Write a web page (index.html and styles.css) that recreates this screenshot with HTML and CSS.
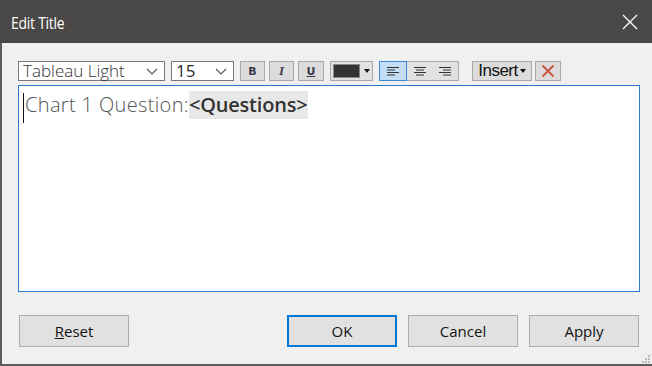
FILE: index.html
```html
<!DOCTYPE html>
<html>
<head>
<meta charset="utf-8">
<link rel="stylesheet" href="styles.css">
</head>
<body>
<div class="window">
  <div class="titlebar">
    <span class="title">Edit Title</span>
    <svg class="close" width="16" height="16" viewBox="0 0 16 16"><path d="M1 1L15 15M15 1L1 15" stroke="#fff" stroke-width="1.3" fill="none"/></svg>
  </div>
  <div class="content">
    <div class="toolbar">
      <div class="select font-sel"><span>Tableau Light</span><svg class="chev" width="12" height="7" viewBox="0 0 12 7"><path d="M1 1L6 6L11 1" stroke="#555" stroke-width="1.1" fill="none"/></svg></div>
      <div class="select size-sel"><span>15</span><svg class="chev" width="12" height="7" viewBox="0 0 12 7"><path d="M1 1L6 6L11 1" stroke="#555" stroke-width="1.1" fill="none"/></svg></div>
      <div class="tbtn fmt b">B</div>
      <div class="tbtn fmt i">I</div>
      <div class="tbtn fmt u">U</div>
      <div class="tbtn color"><span class="swatch"></span><span class="caret"></span></div>
      <div class="align">
        <div class="abtn sel"><svg width="12" height="9" viewBox="0 0 12 9"><path d="M0 .5H12M0 3H8M0 5.5H12M0 8H8" stroke="#333" fill="none"/></svg></div>
        <div class="abtn"><svg width="12" height="9" viewBox="0 0 12 9"><path d="M0 .5H12M2 3H10M0 5.5H12M2 8H10" stroke="#333" fill="none"/></svg></div>
        <div class="abtn"><svg width="12" height="9" viewBox="0 0 12 9"><path d="M0 .5H12M4 3H12M0 5.5H12M4 8H12" stroke="#333" fill="none"/></svg></div>
      </div>
      <div class="tbtn insert">Insert<span class="caret"></span></div>
      <div class="tbtn clear"><svg width="14" height="14" viewBox="0 0 14 14"><path d="M1.5 1.5L12.5 12.5M12.5 1.5L1.5 12.5" stroke="#c8553d" stroke-width="1.8" fill="none"/></svg></div>
    </div>
    <div class="editor">
      <div class="line"><span class="cursor"></span><span class="plain">Chart 1 Question:</span><span class="field">&lt;Questions&gt;</span></div>
    </div>
    <div class="buttons">
      <div class="btn"><span class="ul">R</span>eset</div>
      <div class="spacer"></div>
      <div class="btn ok">OK</div>
      <div class="btn">Cancel</div>
      <div class="btn">Apply</div>
    </div>
  </div>
  <div class="grip">
    <svg width="10" height="10" viewBox="0 0 10 10" fill="#b8b8b8"><rect x="7" y="1" width="2" height="2"/><rect x="4" y="4" width="2" height="2"/><rect x="7" y="4" width="2" height="2"/><rect x="1" y="7" width="2" height="2"/><rect x="4" y="7" width="2" height="2"/><rect x="7" y="7" width="2" height="2"/></svg>
  </div>
</div>
</body>
</html>
```

FILE: styles.css
```css
* { box-sizing: border-box; }
html, body { margin: 0; padding: 0; }
body { width: 652px; height: 366px; overflow: hidden; background: #f0f0f0; font-family: "Noto Sans", "Open Sans", sans-serif; }
.window { position: relative; width: 652px; height: 366px; background: #f0f0f0; border-left: 2px solid #5c5c5c; border-bottom: 2px solid #5c5c5c; }
.titlebar { height: 43px; background: #4a4846; display: flex; align-items: center; justify-content: space-between; padding: 0 14px 0 11px; margin-left: -2px; }
.title { display: inline-block; color: #fff; font-family: "Open Sans", "Noto Sans", sans-serif; font-size: 17px; letter-spacing: -0.3px; transform: scaleX(0.82); transform-origin: left center; margin-top: 1px; }
.content { padding: 18px 10px 0 16px; }
.toolbar { display: flex; height: 20px; align-items: stretch; }
.select { display: flex; align-items: center; justify-content: space-between; background: #fff; border: 1px solid #7a7a7a; padding: 0 6px 0 4px; font-family: "Open Sans", sans-serif; font-size: 17px; color: #2a2a2a; line-height: 18px; }
.font-sel { width: 147px; font-weight: 300; color: #333; }
.size-sel { width: 63px; margin-left: 6px; }
.tbtn { display: flex; align-items: center; justify-content: center; background: #dcdcdc; border: 1px solid #a8a8a8; }
.fmt { width: 25px; font-family: "DejaVu Sans", sans-serif; font-weight: bold; font-size: 11px; color: #3a3a4a; }
.b { margin-left: 6px; }
.i { margin-left: 4px; font-style: italic; font-family: "Liberation Serif", serif; font-size: 13px; }
.u { margin-left: 4px; width: 26px; text-decoration: underline; }
.color { width: 43px; margin-left: 6px; justify-content: flex-start; padding-left: 2px; background: #e1e1e1; }
.swatch { width: 27px; height: 14px; background: #333; border: 1px solid #888; }
.caret { width: 0; height: 0; border-left: 3.5px solid transparent; border-right: 3.5px solid transparent; border-top: 4px solid #111; margin-left: 4px; }
.align { display: flex; margin-left: 6px; width: 80px; border: 1px solid #a8a8a8; background: #e1e1e1; }
.abtn { flex: 1; display: flex; align-items: center; justify-content: center; }
.abtn.sel { background: #c5def5; outline: 1px solid #3a8ad8; outline-offset: -1px; margin: -1px 0 -1px -1px; flex: 0 0 28px; }
.insert { width: 60px; margin-left: 13px; font-family: "Liberation Sans", sans-serif; font-size: 17px; color: #111; letter-spacing: -0.5px; }
.insert .caret { margin-left: 2px; }
.clear { width: 26px; margin-left: 3px; }
.editor { margin-top: 4px; width: 622px; height: 207px; background: #fff; border: 1px solid #2b7bd0; padding: 5px 0 0 4px; }
.line { display: flex; align-items: stretch; height: 28px; font-size: 20px; font-family: "Open Sans", "Noto Sans", sans-serif; }
.cursor { width: 1px; background: #111; margin-top: 2px; margin-bottom: -4px; margin-right: 1px; }
.plain { font-weight: 300; color: #555; line-height: 28px; letter-spacing: 0.35px; }
.field { background: #e8e8e8; color: #333; font-weight: 600; line-height: 28px; letter-spacing: -0.2px; padding-right: 1px; }
.buttons { display: flex; margin-top: 23px; width: 621px; padding-left: 1px; }
.btn { width: 110px; height: 32px; display: flex; align-items: center; justify-content: center; background: #e1e1e1; border: 1px solid #adadad; font-family: "Open Sans", "Noto Sans", sans-serif; font-size: 15px; color: #111; }
.spacer { flex: 1; }
.ul { text-decoration: underline; }
.ok { border: 2px solid #0078d7; }
.btn + .btn { margin-left: 11px; }
.grip { position: absolute; right: 1px; bottom: 0; width: 10px; height: 10px; }
.grip svg { display: block; }
```
